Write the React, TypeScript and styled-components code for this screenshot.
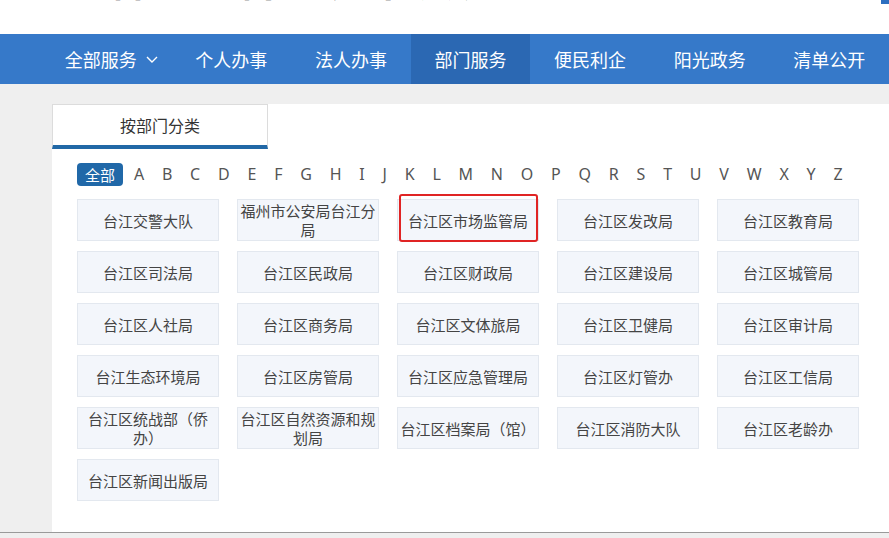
import React from "react";
import styled, { createGlobalStyle } from "styled-components";

const GlobalStyle = createGlobalStyle`
  html, body {
    margin: 0;
    padding: 0;
    background: #efefef;
    font-family: "Noto Sans CJK SC", "Noto Sans", sans-serif;
    overflow: hidden;
  }
`;

const Page = styled.div`
  width: 889px;
  height: 538px;
  overflow: hidden;
  display: flex;
  flex-direction: column;
`;

const Header = styled.div`
  height: 34px;
  background: #fff;
  overflow: hidden;
  position: relative;
`;

const HeaderInner = styled.div`
  display: flex;
  align-items: flex-end;
  gap: 14px;
  margin-top: -41px;
  padding-left: 60px;
  height: 44px;
`;

const Title = styled.div`
  font-size: 36px;
  font-weight: 700;
  color: #111;
  letter-spacing: 8px;
  line-height: 44px;
  white-space: nowrap;
`;

const HeaderBadge = styled.div`
  position: absolute;
  right: 0;
  top: 0;
  width: 8px;
  height: 4px;
  background: #2d6fc0;
`;

const Nav = styled.nav`
  height: 50px;
  background: #3679c9;
  display: flex;
  padding-left: 52px;
`;

const NavItem = styled.div<{ $active?: boolean }>`
  width: 120px;
  display: flex;
  align-items: center;
  justify-content: center;
  gap: 8px;
  color: #fff;
  font-size: 18px;
  background: ${(p) => (p.$active ? "#2b68b3" : "transparent")};
`;

const Body = styled.div`
  flex: 1;
  display: flex;
  padding-top: 20px;
  padding-left: 52px;
  border-bottom: 1px solid #9a9a9a;
  margin-bottom: 5px;
`;

const Panel = styled.div`
  flex: 1;
  background: #fff;
  display: flex;
  flex-direction: column;
`;

const Tabs = styled.div`
  display: flex;
`;

const Tab = styled.div`
  width: 214px;
  height: 40px;
  border: 1px solid #dcdcdc;
  border-bottom: 4px solid #2168a6;
  display: flex;
  align-items: center;
  justify-content: center;
  font-size: 16px;
  color: #333;
`;

const Content = styled.div`
  padding: 13px 0 0 25px;
`;

const Letters = styled.div`
  display: flex;
  align-items: center;
  height: 24px;
`;

const AllBadge = styled.span`
  background: #2068a8;
  color: #fff;
  border-radius: 4px;
  font-size: 15px;
  height: 23px;
  width: 46px;
  display: flex;
  align-items: center;
  justify-content: center;
  margin-right: 2px;
`;

const Letter = styled.span`
  font-family: "Noto Sans", "Open Sans", sans-serif;
  font-size: 16px;
  color: #555;
  padding: 0 8.9px;
`;

const Grid = styled.div`
  display: grid;
  grid-template-columns: repeat(5, 142px);
  grid-auto-rows: 42px;
  column-gap: 18px;
  row-gap: 10px;
  margin-top: 13px;
`;

const Dept = styled.div<{ $picked?: boolean }>`
  position: relative;
  box-sizing: border-box;
  background: #f3f6fb;
  border: 1px solid #e3e8ef;
  display: flex;
  align-items: center;
  justify-content: center;
  text-align: center;
  font-size: 15px;
  line-height: 19px;
  color: #444;
  padding: 0 2px;

  ${(p) =>
    p.$picked &&
    `
    &::after {
      content: "";
      position: absolute;
      left: 1px;
      right: 0px;
      top: -6px;
      bottom: -2px;
      border: 2px solid #e02424;
      border-radius: 3px;
    }
  `}
`;

const letters = "ABCDEFGHIJKLMNOPQRSTUVWXYZ".split("");

const navItems = ["个人办事", "法人办事", "部门服务", "便民利企", "阳光政务", "清单公开"];

const depts = [
  "台江交警大队",
  "福州市公安局台江分局",
  "台江区市场监管局",
  "台江区发改局",
  "台江区教育局",
  "台江区司法局",
  "台江区民政局",
  "台江区财政局",
  "台江区建设局",
  "台江区城管局",
  "台江区人社局",
  "台江区商务局",
  "台江区文体旅局",
  "台江区卫健局",
  "台江区审计局",
  "台江生态环境局",
  "台江区房管局",
  "台江区应急管理局",
  "台江区灯管办",
  "台江区工信局",
  "台江区统战部（侨办）",
  "台江区自然资源和规划局",
  "台江区档案局（馆）",
  "台江区消防大队",
  "台江区老龄办",
  "台江区新闻出版局",
];

export default function App() {
  return (
    <Page>
      <GlobalStyle />
      <Header>
        <HeaderInner>
          <svg width="36" height="44" viewBox="0 0 36 44">
            <circle cx="18" cy="22" r="17" fill="none" stroke="#8a98a8" strokeWidth="1.5" />
          </svg>
          <Title>台江区网上办事大厅</Title>
        </HeaderInner>
        <HeaderBadge />
      </Header>
      <Nav>
        <NavItem>
          全部服务
          <svg width="14" height="10" viewBox="0 0 14 10">
            <path d="M2 3 L7 8 L12 3" fill="none" stroke="#fff" strokeWidth="1.4" />
          </svg>
        </NavItem>
        {navItems.map((n) => (
          <NavItem key={n} $active={n === "部门服务"}>
            {n}
          </NavItem>
        ))}
      </Nav>
      <Body>
        <Panel>
          <Tabs>
            <Tab>按部门分类</Tab>
          </Tabs>
          <Content>
            <Letters>
              <AllBadge>全部</AllBadge>
              {letters.map((l) => (
                <Letter key={l}>{l}</Letter>
              ))}
            </Letters>
            <Grid>
              {depts.map((d) => (
                <Dept key={d} $picked={d === "台江区市场监管局"}>
                  {d}
                </Dept>
              ))}
            </Grid>
          </Content>
        </Panel>
      </Body>
    </Page>
  );
}
